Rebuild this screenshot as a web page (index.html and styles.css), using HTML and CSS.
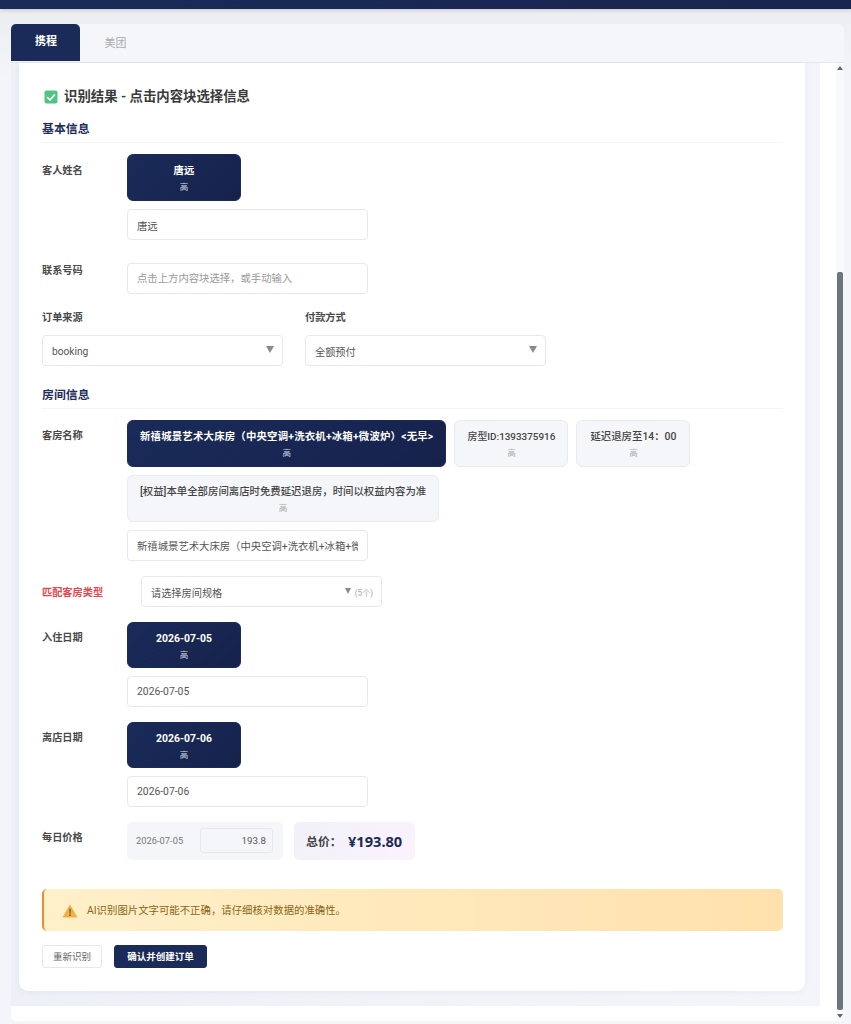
FILE: index.html
```html
<!DOCTYPE html>
<html lang="zh-CN">
<head>
<meta charset="utf-8">
<title>识别结果</title>
<link rel="stylesheet" href="styles.css">
</head>
<body>
<div class="topbar"></div>
<main class="shell">
  <nav class="tabs">
    <div class="tab tab-active">携程</div>
    <div class="tab">美团</div>
  </nav>
  <div class="panel">
    <div class="scroller">
      <section class="card">
        <h1 class="title">
          <svg class="icon-check" viewBox="0 0 14 14" aria-hidden="true"><rect x="0.5" y="0.5" width="13" height="13" rx="2" fill="#4ec583"/><path d="M3.2 7.2 6 10 10.9 4.4" fill="none" stroke="#fff" stroke-width="1.7"/></svg>
          识别结果 - 点击内容块选择信息
        </h1>

        <h2 class="section">基本信息</h2>
        <div class="field field-wide">
          <label class="label label-guest">客人姓名</label>
          <div class="stack">
            <div class="chips">
              <div class="chip chip-on"><span class="chip-text">唐远</span><span class="chip-conf">高</span></div>
            </div>
            <input class="input" value="唐远">
          </div>
        </div>
        <div class="field field-contact">
          <label class="label label-flush">联系号码</label>
          <div class="stack">
            <input class="input" placeholder="点击上方内容块选择，或手动输入">
          </div>
        </div>

        <div class="pair">
          <div class="pair-col">
            <label class="label label-top">订单来源</label>
            <div class="select"><span>booking</span><i class="caret"></i></div>
          </div>
          <div class="pair-col">
            <label class="label label-top">付款方式</label>
            <div class="select"><span>全额预付</span><i class="caret"></i></div>
          </div>
        </div>

        <h2 class="section section-room">房间信息</h2>
        <div class="field">
          <label class="label">客房名称</label>
          <div class="stack">
            <div class="chips">
              <div class="chip chip-on"><span class="chip-text chip-text-wide">新禧城景艺术大床房（中央空调+洗衣机+冰箱+微波炉）&lt;无早&gt;</span><span class="chip-conf">高</span></div>
              <div class="chip"><span class="chip-text chip-text-tight">房型ID:1393375916</span><span class="chip-conf">高</span></div>
              <div class="chip"><span class="chip-text">延迟退房至14：00</span><span class="chip-conf">高</span></div>
              <div class="chip"><span class="chip-text">[权益]本单全部房间离店时免费延迟退房，时间以权益内容为准</span><span class="chip-conf">高</span></div>
            </div>
            <input class="input" value="新禧城景艺术大床房（中央空调+洗衣机+冰箱+微波炉）<无早>">
          </div>
        </div>
        <div class="field">
          <label class="label label-match">匹配客房类型</label>
          <div class="select"><span>请选择房间规格</span><i class="caret caret-sm"></i><em class="count">(5个)</em></div>
        </div>
        <div class="field">
          <label class="label">入住日期</label>
          <div class="stack">
            <div class="chips">
              <div class="chip chip-on chip-date"><span class="chip-text">2026-07-05</span><span class="chip-conf">高</span></div>
            </div>
            <input class="input" value="2026-07-05">
          </div>
        </div>
        <div class="field">
          <label class="label">离店日期</label>
          <div class="stack">
            <div class="chips">
              <div class="chip chip-on chip-date"><span class="chip-text">2026-07-06</span><span class="chip-conf">高</span></div>
            </div>
            <input class="input" value="2026-07-06">
          </div>
        </div>
        <div class="field field-price">
          <label class="label">每日价格</label>
          <div class="price-row">
            <div class="price-day">
              <span class="price-date">2026-07-05</span>
              <input class="price-input" value="193.8">
            </div>
            <div class="total"><span class="total-label">总价：</span><span class="total-value">¥193.80</span></div>
          </div>
        </div>

        <div class="notice">
          <svg class="icon-warn" viewBox="0 0 16 14" aria-hidden="true"><path d="M8 .6 15.6 13.6H.4Z" fill="#efb04a"/><path d="M7.3 4.8h1.4l-.2 5H7.5Z" fill="#7a4d12"/><rect x="7.3" y="10.5" width="1.4" height="1.5" fill="#7a4d12"/></svg>
          <span>AI识别图片文字可能不正确，请仔细核对数据的准确性。</span>
        </div>

        <div class="actions">
          <button class="btn btn-ghost">重新识别</button>
          <button class="btn btn-primary">确认并创建订单</button>
        </div>
      </section>
    </div>
    <div class="scrollbar">
      <i class="sb-up"></i>
      <div class="sb-thumb"></div>
      <i class="sb-down"></i>
    </div>
  </div>
</main>
</body>
</html>
```
FILE: styles.css
```css
* { box-sizing: border-box; }
html, body { margin: 0; height: 1024px; overflow: hidden; }
body {
  background: linear-gradient(180deg, #ecedef 9px, #f0f1f5 40px, #f3f5fa 80px);
  font-family: Roboto, "Noto Sans CJK SC", sans-serif;
  color: #444;
}
.topbar {
  height: 9px;
  background: linear-gradient(90deg, #1a2b59, #17254f);
  box-shadow: 0 1px 4px rgba(26, 43, 89, .2);
}
.shell { padding: 15px 7px 0 11px; }
.tabs {
  display: flex;
  height: 39px;
  background: #f5f6fa;
  border-bottom: 1px solid #e5e7eb;
  border-radius: 5px 5px 0 0;
}
.tab {
  width: 71px;
  height: 38px;
  padding-top: 12px;
  font-size: 11px;
  line-height: 16px;
  text-align: center;
  color: #aaa;
}
.tab-active {
  width: 69px;
  height: 37px;
  padding: 10px 0 0 1px;
  background: #1a2b59;
  border-radius: 5px 5px 0 0;
  color: #fff;
  font-weight: 700;
}
.panel {
  display: flex;
  height: 958px;
  background: #fff;
  border-radius: 0 0 5px 5px;
}
.scroller {
  width: 809px;
  height: 943px;
  padding-left: 8px;
  background: linear-gradient(90deg, #eef0f7, #f4f5fa);
}
.card {
  width: 786px;
  height: 928px;
  padding: 25px 22px 0 23px;
  background: #fff;
  border-radius: 0 0 9px 9px;
  box-shadow: 0 1px 6px rgba(26, 43, 89, .05);
}
.title {
  display: flex;
  align-items: center;
  gap: 6px;
  margin: 0 0 15px 2px;
  font-size: 13.4px;
  line-height: 18px;
  font-weight: 700;
  color: #3a3a3a;
}
.icon-check { width: 14px; height: 14px; flex: none; }
.section {
  margin: 0 0 11px;
  padding-bottom: 5px;
  border-bottom: 1px solid #f3f4f6;
  font-size: 11.9px;
  line-height: 16px;
  font-weight: 700;
  color: #1f2f5c;
}
.section-room { margin-top: 21px; }
.field { display: flex; margin-bottom: 15px; }
.field-wide { margin-bottom: 22.5px; }
.field-contact { margin-bottom: 17px; }
.field-price { margin-bottom: 29px; }
.label {
  width: 85px;
  flex: none;
  padding-top: 9px;
  font-size: 10.2px;
  line-height: 14px;
  font-weight: 700;
  color: #4a4a4a;
}
.label-guest { padding-top: 10px; }
.label-flush { padding-top: 1px; }
.label-match { width: 99px; padding-top: 10px; color: #e0484c; font-weight: 600; }
.label-top { display: block; width: auto; padding: 0; margin-bottom: 10px; }
.stack { display: flex; flex-direction: column; gap: 8px; width: 656px; }
.chips { display: flex; flex-wrap: wrap; gap: 8px; }
.chip {
  display: flex;
  flex-direction: column;
  align-items: center;
  min-width: 114px;
  height: 47px;
  padding: 8px 12px 0;
  background: #f5f6fa;
  border: 1px solid #e9ebf0;
  border-radius: 6px;
}
.chip-date { height: 46px; }
.chip-on {
  background: linear-gradient(135deg, #1a2b59, #16224c);
  border-color: #1a2b59;
}
.chip-text {
  font-size: 10.4px;
  line-height: 16px;
  font-weight: 500;
  color: #444;
  white-space: nowrap;
}
.chip-text-wide { letter-spacing: .2px; }
.chip-text-tight { font-size: 9.9px; }
.chip-conf {
  font-size: 8.5px;
  line-height: 16px;
  color: #aaa;
}
.chip-on .chip-text { color: #fff; font-weight: 700; }
.chip-on .chip-conf { color: #d5d8e2; }
.input {
  display: block;
  width: 241px;
  height: 31px;
  padding: 1px 9px 0;
  background: #fff;
  border: 1px solid #e6e8ec;
  border-radius: 4px;
  font: inherit;
  font-size: 10.35px;
  color: #555;
  outline: none;
}
.input::placeholder { color: #999; opacity: 1; }
.pair { display: flex; gap: 21.8px; }
.pair-col { width: 241.2px; }
.select {
  display: flex;
  align-items: center;
  width: 241.2px;
  height: 31px;
  padding: 2px 8px 0 9px;
  background: #fff;
  border: 1px solid #e6e8ec;
  border-radius: 4px;
  font-size: 10.2px;
  color: #555;
}
.select span { flex: 1; }
.caret {
  width: 0;
  height: 0;
  margin-top: -3px;
  border-left: 4px solid transparent;
  border-right: 4px solid transparent;
  border-top: 7px solid #8a8a8a;
}
.caret-sm { border-left-width: 3.5px; border-right-width: 3.5px; border-top-width: 6px; }
.count {
  margin-left: 4px;
  font-style: normal;
  font-size: 8.2px;
  color: #aaa;
}
.price-row { display: flex; gap: 11px; }
.price-day {
  display: flex;
  align-items: center;
  width: 156px;
  height: 38px;
  padding: 0 10px 0 9px;
  background: #f5f6fa;
  border-radius: 5px;
}
.price-date { width: 64px; flex: none; font-size: 9.35px; color: #777; }
.price-input {
  width: 73px;
  height: 25px;
  padding: 0 6px;
  background: #f5f6fa;
  border: 1px solid #e6e8ec;
  border-radius: 3px;
  font: inherit;
  font-size: 9.8px;
  color: #555;
  text-align: right;
  outline: none;
}
.total {
  display: flex;
  align-items: center;
  width: 121px;
  height: 38px;
  padding-left: 12px;
  background: linear-gradient(135deg, #f0f1f8, #fcf2fd);
  border-radius: 5px;
}
.total-label { width: 42px; flex: none; font-size: 11.9px; font-weight: 600; color: #444; }
.total-value {
  font-family: "Noto Sans", sans-serif;
  font-size: 14.6px;
  font-weight: 700;
  color: #1a2b59;
  white-space: nowrap;
}
.notice {
  display: flex;
  align-items: center;
  height: 42px;
  padding-left: 18px;
  gap: 9px;
  background: linear-gradient(90deg, #fff0c9, #ffe1ad);
  border-left: 2px solid #ef8a2f;
  border-radius: 5px;
  font-size: 10.4px;
  font-weight: 400;
  color: #8a6516;
}
.icon-warn { width: 16px; height: 14px; flex: none; margin-top: 3px; }
.actions { display: flex; gap: 12px; margin-top: 14px; }
.btn {
  height: 23px;
  padding: 0;
  border-radius: 3px;
  font: inherit;
  font-size: 9.5px;
}
.btn-ghost { width: 60px; background: #fff; border: 1px solid #e6e8ec; color: #666; }
.btn-primary { width: 93px; background: #1a2b59; border: 1px solid #1a2b59; color: #fff; font-weight: 700; }
.scrollbar {
  display: flex;
  flex-direction: column;
  align-items: center;
  width: 8px;
  margin-left: 16px;
  height: 958px;
  background: #f8f9fb;
}
.sb-up, .sb-down {
  width: 0;
  height: 0;
  border-left: 3px solid transparent;
  border-right: 3px solid transparent;
}
.sb-up { margin-top: 3px; border-bottom: 4px solid #5f6670; }
.sb-thumb {
  width: 6px;
  height: 738px;
  margin-top: 202px;
  background: #6c757d;
  border-radius: 2px;
}
.sb-down { margin-top: 4px; border-top: 4px solid #5f6670; }
```
